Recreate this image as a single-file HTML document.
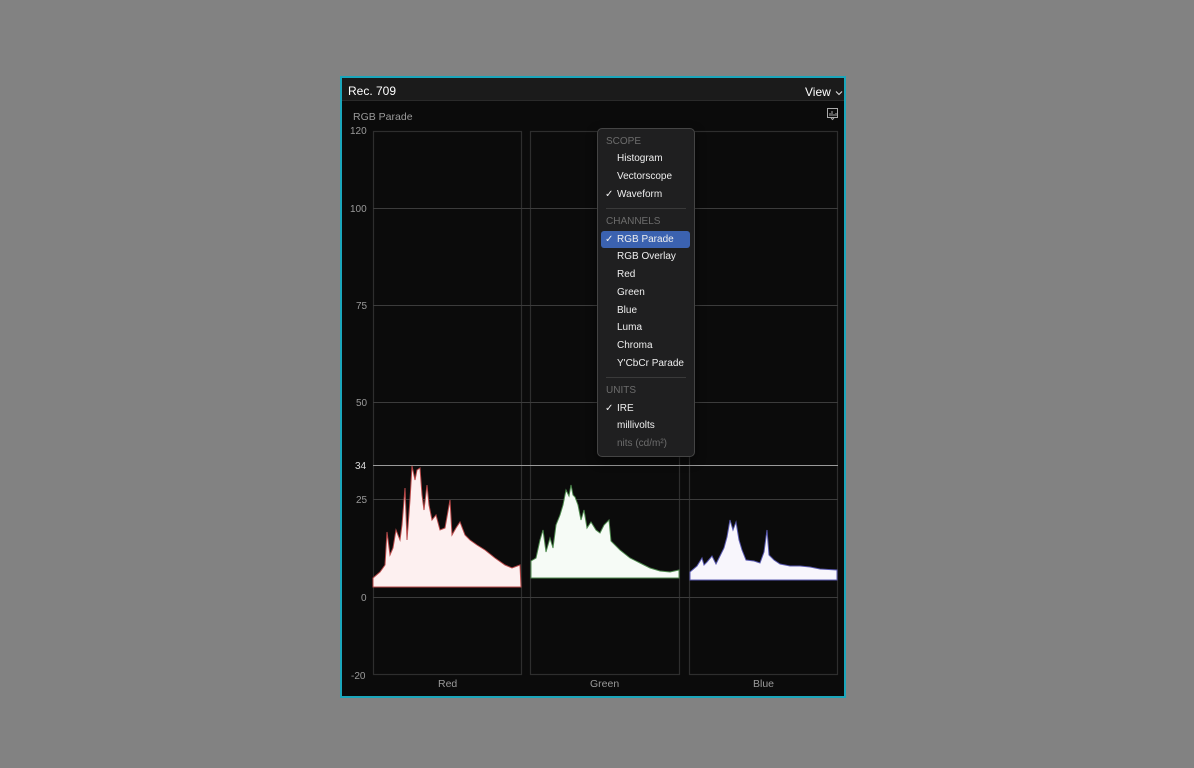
<!DOCTYPE html>
<html><head><meta charset="utf-8"><style>
*{margin:0;padding:0;box-sizing:border-box}
body{width:1194px;height:768px;background:#828282;position:relative;overflow:hidden;font-family:"Liberation Sans",sans-serif}
.win{position:absolute;left:340px;top:76px;width:506px;height:622px;border:2px solid #1ba6bb;background:#0b0b0b}
.hdr{position:absolute;left:0;top:0;width:502px;height:23px;background:#1b1b1b;border-bottom:1px solid #2a2a2a}
.t{position:absolute;color:#fff;font-size:12px;white-space:nowrap}
.lab{position:absolute;color:#9a9a9a;font-size:10px;white-space:nowrap}
.menu{position:absolute;left:597px;top:128px;width:98px;height:329px;background:#1f1f20;border:1px solid #444;border-radius:5px;box-shadow:0 4px 10px rgba(0,0,0,.5)}
.mi{position:absolute;left:19px;font-size:10px;color:#eee;white-space:nowrap}
.mh{position:absolute;left:8px;font-size:10px;color:#6c6c6c;white-space:nowrap}
.ck{position:absolute;left:7px;font-size:10px;color:#eee}
.sep{position:absolute;left:8px;width:80px;height:1px;background:#3a3a3a}
</style></head><body>
<div class="win">
<div class="hdr"></div>
<div class="t" style="left:6px;top:6px;font-size:12px">Rec. 709</div>
<div class="t" style="left:463px;top:7px;font-size:12px">View</div>
<svg style="position:absolute;left:493px;top:12px" width="8" height="6"><path d="M1 1.5l3 3 3-3" fill="none" stroke="#ddd" stroke-width="1.1"/></svg>
<div class="lab" style="left:11px;top:33px;font-size:10.5px">RGB Parade</div>
</div>
<svg style="position:absolute;left:0;top:0" width="1194" height="768">
<g fill="none" stroke="#2e2e2e" stroke-width="1.2">
<rect x="373.5" y="131.5" width="148" height="543"/>
<rect x="530.5" y="131.5" width="149" height="543"/>
<rect x="689.5" y="131.5" width="148" height="543"/>
</g>
<g stroke="#3c3c3c" stroke-width="1">
<line x1="373" y1="208.5" x2="838" y2="208.5"/>
<line x1="373" y1="305.5" x2="838" y2="305.5"/>
<line x1="373" y1="402.5" x2="838" y2="402.5"/>
<line x1="373" y1="499.5" x2="838" y2="499.5"/>
<line x1="373" y1="597.5" x2="838" y2="597.5"/>
</g>
<line x1="373" y1="465.5" x2="838" y2="465.5" stroke="#9a9a9a" stroke-width="1"/>
<polygon fill="#fdf0f0" stroke="#b94a4a" stroke-width="1" points="373,587 373,578 380,572 385,565 387,532 390,555 393,548 396,530 400,540 402,525 405,488 407,540 410,500 412,466 415,480 417,470 420,468 422,495 424,510 427,485 429,505 432,520 436,515 440,530 445,528 450,500 452,535 456,528 460,522 465,535 470,540 477,545 485,550 495,558 505,565 512,568 520,565 521,587"/>
<polygon fill="#f6fbf6" stroke="#4e8a4e" stroke-width="1" points="531,578 531,561 536,558 540,540 543,530 546,552 550,538 553,548 556,525 560,515 563,505 566,490 569,496 571,485 573,495 575,497 578,505 581,520 584,510 587,528 591,522 596,530 600,533 604,525 609,520 611,541 620,550 630,558 640,563 650,568 660,571 670,572 679,570 679,578"/>
<polygon fill="#f8f6fc" stroke="#5a5ab0" stroke-width="1" points="690,580 690,572 697,566 702,558 704,565 707,562 712,556 716,564 720,556 724,548 727,537 730,520 733,530 736,522 739,540 742,550 746,560 754,561 760,563 764,552 767,530 769,555 774,560 780,564 790,566 800,566 810,567 820,569 837,570 837,580"/>
<g fill="none" stroke="#aaa" stroke-width="1">
<rect x="827.5" y="108.5" width="10" height="9"/>
<path d="M830 116v-3M832 116v-5M834 116v-2M836 116v-3M831 118l1.5 1.5 1.5-1.5"/>
</g>
</svg>
<div class="lab" style="left:350px;top:126px">120</div>
<div class="lab" style="left:350px;top:204px">100</div>
<div class="lab" style="left:356px;top:301px">75</div>
<div class="lab" style="left:356px;top:398px">50</div>
<div class="lab" style="left:355px;top:461px;color:#ddd">34</div>
<div class="lab" style="left:356px;top:495px">25</div>
<div class="lab" style="left:361px;top:593px">0</div>
<div class="lab" style="left:351px;top:671px">-20</div>
<div class="lab" style="left:438px;top:678px;font-size:10.5px">Red</div>
<div class="lab" style="left:590px;top:678px;font-size:10.5px">Green</div>
<div class="lab" style="left:753px;top:678px;font-size:10.5px">Blue</div>
<div class="menu">
<div class="mh" style="top:7px">SCOPE</div>
<div class="mi" style="top:24px">Histogram</div>
<div class="mi" style="top:42px">Vectorscope</div>
<div class="ck" style="top:60px">✓</div><div class="mi" style="top:60px">Waveform</div>
<div class="sep" style="top:79px"></div>
<div class="mh" style="top:87px">CHANNELS</div>
<div style="position:absolute;left:3px;top:102px;width:89px;height:17px;background:#3b62b0;border-radius:3px"></div>
<div class="ck" style="top:105px">✓</div><div class="mi" style="top:105px">RGB Parade</div>
<div class="mi" style="top:122px">RGB Overlay</div>
<div class="mi" style="top:140px">Red</div>
<div class="mi" style="top:158px">Green</div>
<div class="mi" style="top:176px">Blue</div>
<div class="mi" style="top:193px">Luma</div>
<div class="mi" style="top:211px">Chroma</div>
<div class="mi" style="top:229px">Y'CbCr Parade</div>
<div class="sep" style="top:248px"></div>
<div class="mh" style="top:256px">UNITS</div>
<div class="ck" style="top:274px">✓</div><div class="mi" style="top:274px">IRE</div>
<div class="mi" style="top:291px">millivolts</div>
<div class="mi" style="top:309px;color:#6c6c6c">nits (cd/m²)</div>
</div>
</body></html>
